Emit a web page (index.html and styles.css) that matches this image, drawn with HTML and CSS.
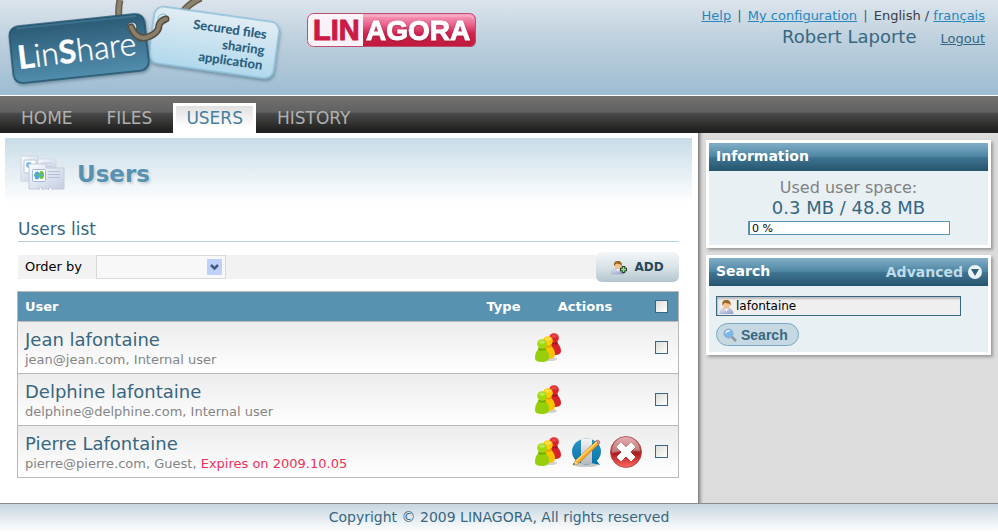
FILE: index.html
```html
<!DOCTYPE html>
<html lang="en">
<head>
<meta charset="utf-8">
<title>LinShare - Users</title>
<link rel="stylesheet" href="styles.css">
</head>
<body>
<svg class="defs" aria-hidden="true">
  <defs>
    <linearGradient id="darkTag" x1="0" y1="0" x2="0" y2="1"><stop offset="0" stop-color="#2a5a74"/><stop offset="1" stop-color="#528dad"/></linearGradient>
    <linearGradient id="lightTag" x1="0" y1="0" x2="0" y2="1"><stop offset="0" stop-color="#e2edf4"/><stop offset="1" stop-color="#b0d8ec"/></linearGradient>
    <linearGradient id="pink" x1="0" y1="0" x2="0" y2="1"><stop offset="0" stop-color="#f9a9c6"/><stop offset=".35" stop-color="#e8618a"/><stop offset=".6" stop-color="#cf2450"/><stop offset="1" stop-color="#c0183a"/></linearGradient>
    <linearGradient id="card" x1="0" y1="0" x2="1" y2="1"><stop offset="0" stop-color="#fafbfd"/><stop offset="1" stop-color="#c3cfe2"/></linearGradient>
    <linearGradient id="blueBall" x1="0" y1="0" x2="0" y2="1"><stop offset="0" stop-color="#2f94c4"/><stop offset="1" stop-color="#0573ab"/></linearGradient>
    <linearGradient id="greyBand" x1="0" y1="0" x2="0" y2="1"><stop offset="0" stop-color="#f4f4f4"/><stop offset="1" stop-color="#b4b8bc"/></linearGradient>
    <linearGradient id="redBall" x1="0" y1="0" x2="0" y2="1"><stop offset="0" stop-color="#d98f92"/><stop offset=".45" stop-color="#a94448"/><stop offset=".55" stop-color="#b01a1e"/><stop offset="1" stop-color="#ff6a64"/></linearGradient>
    <linearGradient id="shirt" x1="0" y1="0" x2="1" y2="1"><stop offset="0" stop-color="#e9ecf8"/><stop offset="1" stop-color="#8f99c4"/></linearGradient>
    <filter id="soft" x="-20%" y="-20%" width="140%" height="150%"><feDropShadow dx="1" dy="2" stdDeviation="1.5" flood-color="#35556a" flood-opacity=".5"/></filter>
  </defs>
  <symbol id="people" viewBox="0 0 28 31">
    <ellipse cx="16" cy="27" rx="7" ry="2" fill="#777" opacity=".3"/>
    <path d="M14 20c0-6 2-10 6-10s7 5 7 9c0 3-3 4-6 4s-7 0-7-3z" fill="#d8232a"/><ellipse cx="20" cy="11" rx="4" ry="1.500" fill="#a8141b"/><circle cx="20" cy="6" r="4.800" fill="#e02128"/><ellipse cx="20" cy="4" rx="3" ry="1.800" fill="#e5484c"/>
    <path d="M7 23c0-6 3-10 7-10s7 5 7 9c0 4-3 5-7 5s-7-1-7-4z" fill="#fdc300"/><ellipse cx="14" cy="14" rx="4" ry="1.500" fill="#e0a000"/><circle cx="14" cy="9" r="4.800" fill="#ffcc00"/><ellipse cx="14" cy="7" rx="3" ry="1.800" fill="#ffdc4d"/>
    <path d="M1 26c0-6 3-10 7-10s7 4 7 9c0 4-3 5-7 5s-7-1-7-4z" fill="#98cf0b"/><ellipse cx="8" cy="17" rx="4" ry="1.500" fill="#74ab00"/><circle cx="8" cy="12" r="4.800" fill="#a0d80c"/><ellipse cx="8" cy="10" rx="3" ry="1.800" fill="#bce653"/>
  </symbol>
  <symbol id="person" viewBox="0 0 16 16">
    <path d="M1 16c0-4 2-6 7-6s7 2 7 6z" fill="url(#shirt)" stroke="#929ac0" stroke-width=".5"/>
    <path d="M6 10l2 3 2-3z" fill="#fff"/>
    <ellipse cx="8" cy="6.500" rx="3.500" ry="4" fill="#f2c391"/>
    <path d="M3.500 7C3 2 5 1 8 1s5 2 4.500 6L11 5 6 4z" fill="#9a651e"/>
  </symbol>
</svg>

<header class="header">
  <div class="brand">
    <svg class="linshare" viewBox="0 0 290 95" role="img" aria-label="LinShare, secured files sharing application">
      <path d="M120 0q-2 8-1 20" fill="none" stroke="#655d4d" stroke-width="7"/><path d="M120 0q-2 8-1 20" fill="none" stroke="#8e836e" stroke-width="4"/>
      <path d="M201-2Q187 4 180 16" fill="none" stroke="#655d4d" stroke-width="7"/><path d="M201-2Q187 4 180 16" fill="none" stroke="#8e836e" stroke-width="4"/>
      <g transform="rotate(8 214 42)" filter="url(#soft)"><rect x="151" y="14" width="126" height="57" rx="9" fill="url(#lightTag)" stroke="#8cbfda" stroke-width="1.500"/></g>
      <g transform="rotate(-6 79 48)" filter="url(#soft)"><rect x="11" y="20" width="136" height="57" rx="9" fill="url(#darkTag)" stroke="#22526c" stroke-width="1.500"/><path d="M19 22h120" stroke="#4d86a3"/></g>
      <circle cx="132" cy="27" r="5" fill="#c5d5df" stroke="#1f475c"/><circle cx="163" cy="19" r="5" fill="#dce8ef" stroke="#85b8d2"/>
      <path d="M131 27q6 14 17 10t11-12q2-5 7-6" fill="none" stroke="#554d3f" stroke-width="7" stroke-linecap="round"/>
      <path d="M131 27q6 14 17 10t11-12q2-5 7-6" fill="none" stroke="#8a7f68" stroke-width="4" stroke-linecap="round"/>
      <text class="tag-name" x="19" y="69" transform="rotate(-7 19 69)"><tspan class="heavy">L</tspan>in<tspan class="heavy">S</tspan>hare</text>
      <g class="tag-line" transform="rotate(8 266 39)"><text x="266" y="39">Secured files</text><text x="266" y="55">sharing</text><text x="266" y="70">application</text></g>
    </svg>
    <svg class="linagora" viewBox="0 0 172 36" role="img" aria-label="LINAGORA">
      <rect x="1" y="1" width="169" height="34" rx="6" fill="url(#pink)"/>
      <path d="M7 1h50v34H7a6 6 0 0 1-6-6V7a6 6 0 0 1 6-6z" fill="#f9f2f8"/>
      <rect x="1.500" y="1.500" width="168" height="33" rx="6" fill="none" stroke="#bb506f"/>
      <path d="M4 14V7q0-3 3-3h157q3 0 3 3" fill="none" stroke="#fff" opacity=".35"/>
      <text class="lin" x="7" y="28">LIN</text>
      <text class="agora" x="60" y="28">AGORA</text>
    </svg>
  </div>
  <div class="account">
    <div class="links"><a href="#">Help</a> <i>|</i> <a href="#">My configuration</a> <i>|</i> <span>English / </span><a href="#">français</a></div>
    <div class="who"><span class="name">Robert Laporte</span><a href="#">Logout</a></div>
  </div>
</header>

<nav class="nav">
  <a href="#">HOME</a><a href="#">FILES</a><a href="#" class="active" aria-current="page">USERS</a><a href="#">HISTORY</a>
</nav>

<div class="body">
  <main class="main">
    <div class="title">
      <svg class="cards" viewBox="0 0 45 38" aria-hidden="true">
        <path d="M18 4h18v12H18z" fill="url(#card)" stroke="#d3d8e2"/><path d="M21 8h12M21 11h12" stroke="#c2cce0"/>
        <path d="M1 1h17v25H1z" fill="url(#card)" stroke="#d0d5df"/><rect x="4" y="5" width="12" height="13" rx="1" fill="#fff" stroke="#b4c6e0"/><circle cx="9" cy="10" r="3" fill="#7bbce4"/><circle cx="13" cy="12" r="3" fill="#9dd684"/>
        <path d="M9 9h17v4h18v21H9z" fill="url(#card)" stroke="#c3cbda"/>
        <path d="M28 16.500h12M28 19.500h12M28 22.500h12" stroke="#b3c1dc"/>
        <rect x="12.500" y="14.500" width="13" height="12" rx="1" fill="#fff" stroke="#9db8de"/>
        <ellipse cx="17" cy="20.500" rx="2.500" ry="4" fill="#4aa5dc"/><ellipse cx="21.500" cy="20" rx="2.500" ry="4" fill="#6cc144"/><path d="M14 20h10" stroke="#5fb39a" stroke-width="2"/>
        <path d="M19 35v-2q2-2 3 0v2M29 35v-2q2-2 3 0v2" fill="#fff" stroke="#aab3c4" stroke-width=".7"/>
      </svg>
      <h1>Users</h1>
    </div>
    <section class="list">
      <h2>Users list</h2>
      <div class="toolbar">
        <label for="order">Order by</label>
        <span class="select">
          <select id="order"><option></option></select>
          <svg viewBox="0 0 15 16" aria-hidden="true"><rect width="15" height="16" rx="1" fill="#bfd0fa"/><path d="M4 6l3.500 3.500L11 6" fill="none" stroke="#46597f" stroke-width="2.500"/></svg>
        </span>
        <button type="button" class="add">
          <svg viewBox="0 0 17 17" aria-hidden="true"><use href="#person" width="14" height="16"/><path d="M12.500 7v7M9 10.500h7" stroke="#24402b" stroke-width="3.500"/><path d="M12.500 8v5M10 10.500h5" stroke="#8fe47e" stroke-width="1.500"/></svg>
          ADD
        </button>
      </div>
      <table class="users">
        <thead>
          <tr><th>User</th><th class="type">Type</th><th class="actions">Actions</th><th class="pick"><input type="checkbox" aria-label="Select all"></th></tr>
        </thead>
        <tbody>
          <tr>
            <td><div class="person">Jean lafontaine</div><div class="detail">jean@jean.com, Internal user</div></td>
            <td></td>
            <td class="actions"><div class="icons"><svg class="group"><use href="#people"/></svg></div></td>
            <td class="pick"><input type="checkbox" aria-label="Select Jean lafontaine"></td>
          </tr>
          <tr>
            <td><div class="person">Delphine lafontaine</div><div class="detail">delphine@delphine.com, Internal user</div></td>
            <td></td>
            <td class="actions"><div class="icons"><svg class="group"><use href="#people"/></svg></div></td>
            <td class="pick"><input type="checkbox" aria-label="Select Delphine lafontaine"></td>
          </tr>
          <tr>
            <td><div class="person">Pierre Lafontaine</div><div class="detail">pierre@pierre.com, Guest, <span class="expires">Expires on 2009.10.05</span></div></td>
            <td></td>
            <td class="actions"><div class="icons"><svg class="group"><use href="#people"/></svg>
              <button type="button" aria-label="Edit"><svg viewBox="0 0 32 32"><ellipse cx="16" cy="29" rx="12" ry="2" fill="#777" opacity=".4"/><path d="M24 21l6 8-9-2z" fill="#0573ab"/><ellipse cx="16.500" cy="15.500" rx="14.500" ry="13" fill="url(#blueBall)"/><path d="M11 3.300q5-1.500 11 0v24.500q-6 1-11 0z" fill="url(#greyBand)"/><path d="M3 29l2-4L26 5l3 3L8 28z" fill="#f7a928" stroke="#a45a10" stroke-width=".5"/><path d="M6 25L27 6" stroke="#ffe178" stroke-width="1.200"/><path d="M3 29l2-4 3 3z" fill="#f2dcae"/><path d="M3 29l1-2 1 1z" fill="#222"/><path d="M26 5l1-1q3 0 3 3l-1 1z" fill="#d99a9a" stroke="#8f5555" stroke-width=".5"/></svg></button>
              <button type="button" aria-label="Delete"><svg viewBox="0 0 32 32"><circle cx="16" cy="16" r="15.500" fill="url(#redBall)" stroke="#a84448" stroke-width=".8"/><path d="M2 17A14 15 0 0 1 30 15Q16 13 2 17z" fill="#fff" opacity=".3"/><path d="M7 11l4-4 5 5 5-5 4 4-5 5 5 5-4 4-5-5-5 5-4-4 5-5z" fill="#fff" stroke="#fff" stroke-linejoin="round"/></svg></button></div></td>
            <td class="pick"><input type="checkbox" aria-label="Select Pierre Lafontaine"></td>
          </tr>
        </tbody>
      </table>
    </section>
  </main>

  <aside class="side">
    <section class="box">
      <h3>Information</h3>
      <div class="space">
        <div class="caption">Used user space:</div>
        <div class="amount">0.3 MB / 48.8 MB</div>
        <div class="meter">0 %</div>
      </div>
    </section>
    <section class="box">
      <h3>Search <a href="#">Advanced <svg viewBox="0 0 14 14" aria-hidden="true"><circle cx="7" cy="7" r="7" fill="#eaf3f7"/><path d="M3 4h8l-4 7z" fill="#2e627d"/></svg></a></h3>
      <form class="search">
        <div class="field"><svg aria-hidden="true"><use href="#person"/></svg><input type="text" aria-label="User name" value="lafontaine"></div>
        <button type="submit"><svg viewBox="0 0 14 14" aria-hidden="true"><path d="M8 8l5 5" stroke="#8e98a0" stroke-width="2.500"/><circle cx="5.500" cy="5.500" r="4.500" fill="#79b7ef" stroke="#93acc4"/><path d="M3 5q1-3 4-2" fill="none" stroke="#dff0ff" stroke-width="1.500"/></svg>Search</button>
      </form>
    </section>
  </aside>
</div>

<footer class="footer">Copyright © 2009 LINAGORA, All rights reserved</footer>
</body>
</html>
```
FILE: styles.css
```css
* { box-sizing: border-box; }
body {
  margin: 0;
  min-height: 100vh;
  display: flex;
  flex-direction: column;
  font: 13px/16px "DejaVu Sans", sans-serif;
  color: #000;
  background: #fff;
}
h1, h2, h3 { margin: 0; }
svg { display: block; flex: none; }
button { font: inherit; cursor: pointer; }
.defs { position: absolute; width: 0; height: 0; }

.header {
  display: flex;
  justify-content: space-between;
  height: 96px;
  border-bottom: 1px solid #fff;
  background: linear-gradient(#dbe4ec, #bccfdd 45%, #9dbdd2);
}
.brand { display: flex; gap: 16px; }
.linshare { width: 290px; height: 95px; }
.linagora { width: 172px; height: 36px; margin-top: 12px; }
.tag-name { font: 300 32px Lato, sans-serif; fill: #fff; stroke: #fff; stroke-width: .4px; }
.heavy { font-weight: 700; }
.tag-line { font: 900 13px Lato, sans-serif; fill: #2d6180; text-anchor: end; }
.lin, .agora { font: 700 29px "Liberation Sans", sans-serif; stroke-width: 1px; }
.lin { fill: #cb1a46; stroke: #cb1a46; }
.agora { font-size: 28px; fill: #fff; stroke: #fff; filter: drop-shadow(0 1px 1px #7c163288); }

.account { padding: 8px 13px 0 0; text-align: right; color: #3d3d3d; }
.account a { color: #2787bd; }
.account i { font-style: normal; margin: 0 2px; color: #2e6784; }
.who { display: flex; justify-content: flex-end; align-items: baseline; gap: 24px; line-height: 24px; margin-top: 1px; }
.who .name { font-size: 18px; color: #38677f; }
.who a { color: #38677f; }

.nav {
  display: flex;
  gap: 8px;
  align-items: flex-end;
  height: 37px;
  padding-left: 8px;
  background: linear-gradient(#73706f, #616161 44%, #4b4b4b 46%, #20221f 92%);
  font-size: 17px;
}
.nav a {
  height: 30px;
  padding: 0 10px;
  border: 3px solid transparent;
  border-bottom: 0;
  line-height: 24px;
  color: #b0b0b0;
  text-decoration: none;
}
.nav .active { color: #477f9f; border-color: #fff; background: linear-gradient(#e0e0e0, #fff 80%); background-clip: padding-box; }

.body { flex: 1; display: flex; background: #dcdcdc; }
.main { flex: 1; min-width: 0; padding: 5px; background: #fff; }
.title {
  display: flex;
  align-items: center;
  gap: 12px;
  height: 72px;
  padding-left: 15px;
  margin-right: 1px;
  background: linear-gradient(#c8dce7, #fff 90%);
}
.cards { width: 45px; height: 38px; }
h1 { font-size: 23px; line-height: 30px; color: #5892b0; text-shadow: 2px 2px 2px #ccd6dc; }
.list { padding: 8px 14px 0 13px; }
h2 { font-size: 17px; font-weight: 400; line-height: 23px; color: #38677f; border-bottom: 1px solid #b4cfdd; }
.toolbar { display: flex; align-items: center; height: 24px; margin: 13px 0 12px; padding-left: 7px; background: #f2f2f2; }
.select { position: relative; margin-left: 14px; }
.select select { display: block; appearance: none; width: 130px; height: 24px; border: 1px solid #d9d9d9; border-radius: 0; background: #f8f8f8; }
.select svg { position: absolute; top: 4px; right: 4px; width: 15px; height: 16px; pointer-events: none; }
.add {
  display: flex;
  align-items: center;
  justify-content: center;
  gap: 6px;
  width: 83px;
  height: 30px;
  margin-left: auto;
  border: 0;
  border-radius: 6px;
  background: linear-gradient(#f3f6f8, #dae3e8 50%, #b4c5cf);
  font-size: 12px;
  font-weight: 700;
  color: #26495c;
}
.add svg { width: 17px; height: 17px; }

.users { width: calc(100% + 1px); margin-left: -1px; border-collapse: collapse; border: 1px solid #b9b9b9; }
.users th { height: 30px; padding: 0 0 0 7px; text-align: left; color: #fff; background: #5892b0; }
.users tr { border-bottom: 1px solid #b9b9b9; }
.users tbody tr { background: linear-gradient(#ececec, #fff); }
.users td { height: 52px; padding: 2px 0 0 7px; }
.users .type { width: 44px; padding: 0; text-align: center; }
.users .actions { width: 119px; padding: 0; text-align: center; }
.users .pick { width: 34px; padding: 0; }
.person { font-size: 18px; line-height: 22px; color: #38677f; }
.detail { line-height: 18px; color: #858585; }
.expires { color: #ee3158; }
.icons { display: flex; align-items: center; gap: 8px; padding-left: 8px; }
.group { width: 28px; height: 31px; }
.icons button { padding: 0; border: 0; background: none; }
.icons button svg { width: 32px; height: 32px; }
input[type="checkbox"] { display: block; appearance: none; width: 13px; height: 13px; margin: 0 auto; border: 1px solid #39668f; background: linear-gradient(135deg, #dcdcd7, #fff); }
.pick input[type="checkbox"] { margin: 0 0 0 10px; }

.side { width: 300px; padding: 7px 7px 7px 8px; background: linear-gradient(90deg, #7b7b7b, #a8a8a8 2px, #cfcfcf 4px, #dcdcdc 6px); }
.box { border: 3px solid #fff; margin-bottom: 7px; background: #e8f0f4; box-shadow: 2px 2px 3px #999; }
h3 {
  display: flex;
  justify-content: space-between;
  height: 28px;
  padding: 0 6px 0 7px;
  font-size: 14px;
  line-height: 27px;
  color: #fff;
  background: linear-gradient(#82aec7, #4d86a3 48%, #3e7592 52%, #26546d);
}
h3 a { display: flex; align-items: center; gap: 5px; color: #bfdcea; text-decoration: none; }
h3 a svg { width: 14px; height: 14px; }
.space { padding: 7px 38px 10px; text-align: center; }
.caption { font-size: 16px; line-height: 19px; color: #808080; }
.amount { font-size: 18px; line-height: 22px; color: #38677f; }
.meter { height: 14px; margin: 2px 0 0 1px; border: 1px solid #5892b0; border-left-width: 2px; padding-left: 2px; background: #fff; text-align: left; font-size: 11px; line-height: 13px; }
.search { padding: 10px 27px 6px 7px; }
.field { display: flex; align-items: center; height: 20px; padding-left: 2px; border: 1px solid #38677f; background: #efefef; box-shadow: inset 1px 2px 2px #bbb; }
.field svg { width: 15px; height: 15px; }
.field input { flex: 1; min-width: 0; padding: 0 2px; border: 0; outline: 0; background: none; font: 12px "DejaVu Sans", sans-serif; }
.search button { display: flex; align-items: center; gap: 4px; height: 23px; margin-top: 7px; padding: 0 10px 0 6px; border: 1px solid #78a9c2; border-radius: 12px; background: #c6d9e3; color: #38677f; font: 700 14px "Liberation Sans", sans-serif; }
.search button svg { width: 14px; height: 14px; }

.footer { height: 29px; border-top: 1px solid #858b8f; background: linear-gradient(#c7d6e0, #fff); font-size: 14px; line-height: 27px; text-align: center; color: #38677f; }
```
